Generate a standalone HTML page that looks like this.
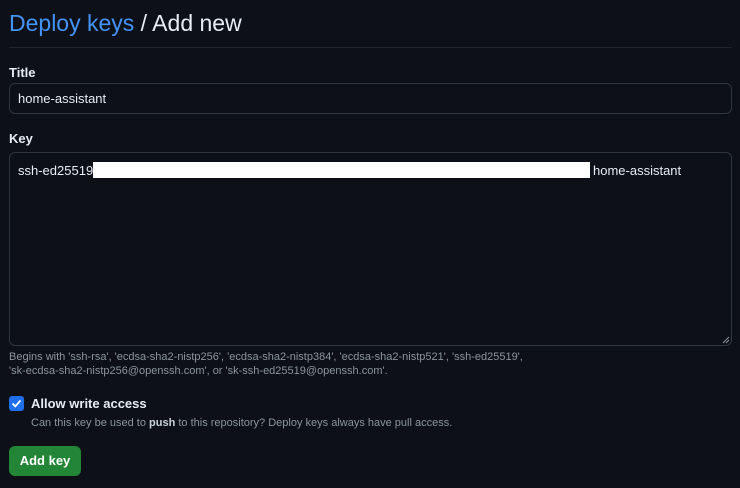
<!DOCTYPE html>
<html><head><style>
body{margin:0;width:740px;height:488px;background:#0d1117;font-family:"Liberation Sans",sans-serif;color:#e6edf3;position:relative;overflow:hidden}
.a{position:absolute}
</style></head><body>
<div class="a" style="left:9px;top:8px;font-size:23px;line-height:30px;white-space:nowrap"><span style="color:#4493f8">Deploy keys</span> / Add new</div>
<div class="a" style="left:9px;top:47px;width:723px;height:1px;background:#21262d"></div>
<div class="a" style="left:9px;top:65px;font-size:13px;font-weight:bold">Title</div>
<div class="a" style="left:9px;top:83px;width:721px;height:29px;border:1px solid #30363d;border-radius:6px;background:#0d1117"></div>
<div class="a" style="left:18px;top:91px;font-size:13px">home-assistant</div>
<div class="a" style="left:9px;top:131px;font-size:13px;font-weight:bold">Key</div>
<div class="a" style="left:9px;top:152px;width:721px;height:192px;border:1px solid #30363d;border-radius:6px;background:#0d1117"></div>
<div class="a" style="left:18px;top:163px;font-size:13px">ssh-ed25519</div>
<div class="a" style="left:93px;top:162px;width:497px;height:16px;background:#fff"></div>
<div class="a" style="left:593px;top:163px;font-size:13px">home-assistant</div>
<svg class="a" style="left:722px;top:336px" width="8" height="8"><path d="M1 7L7 1M4 7L7 4" stroke="#8b949e" stroke-width="1"/></svg>
<div class="a" style="left:9px;top:350px;font-size:11px;line-height:14px;color:#8b949e;width:725px">Begins with 'ssh-rsa', 'ecdsa-sha2-nistp256', 'ecdsa-sha2-nistp384', 'ecdsa-sha2-nistp521', 'ssh-ed25519',<br>'sk-ecdsa-sha2-nistp256@openssh.com', or 'sk-ssh-ed25519@openssh.com'.</div>
<div class="a" style="left:9px;top:396px;width:15px;height:15px;background:#1f6feb;border-radius:3px"></div>
<svg class="a" style="left:9px;top:396px" width="15" height="15"><path d="M3.5 7.5L6.3 10.3L11.5 4.5" stroke="#fff" stroke-width="1.8" fill="none"/></svg>
<div class="a" style="left:31px;top:396px;font-size:13px;font-weight:bold">Allow write access</div>
<div class="a" style="left:31px;top:417px;font-size:11px;color:#8b949e">Can this key be used to <b style="color:#c9d1d9;font-weight:bold">push</b> to this repository? Deploy keys always have pull access.</div>
<div class="a" style="left:9px;top:446px;width:72px;height:30px;background:#238636;border-radius:6px;color:#fff;font-size:13px;font-weight:bold;line-height:30px;text-align:center">Add key</div>
</body></html>
